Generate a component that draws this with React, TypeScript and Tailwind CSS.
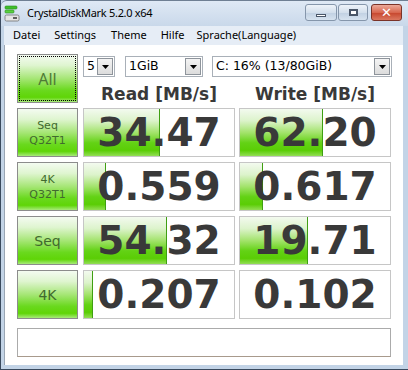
import React from "react";

const rows = [
  { label: ["Seq", "Q32T1"], read: "34.47", rw: 76, write: "62.20", ww: 83 },
  { label: ["4K", "Q32T1"], read: "0.559", rw: 22, write: "0.617", ww: 23 },
  { label: ["Seq"], read: "54.32", rw: 83, write: "19.71", ww: 68 },
  { label: ["4K"], read: "0.207", rw: 9, write: "0.102", ww: 0 },
];

const barBg =
  "bg-[linear-gradient(to_bottom,#f3faef_0%,#dcf3cb_25%,#a3e36c_50%,#63d215_72%,#5acd05_88%,#93de55_100%)]";
const btnBg =
  "bg-[linear-gradient(to_bottom,#f4fbf1_0%,#dff5d0_22%,#a6e676_50%,#6ad91e_75%,#5fd507_90%,#a8ea7a_100%)]";

function Combo({ w, text }: { w: string; text: string }) {
  return (
    <div
      className={`${w} h-[21px] bg-white border border-[#a9b0b8] flex items-center justify-between pl-[3px] pr-[1px]`}
    >
      <span className="text-[12.5px] text-black leading-none" style={{ fontFamily: '"DejaVu Sans", sans-serif' }}>
        {text}
      </span>
      <div className="w-[16px] h-[17px] border border-[#8e949b] bg-[linear-gradient(to_bottom,#f4f4f4,#dcdcdc)] flex items-center justify-center">
        <svg width="7" height="4" viewBox="0 0 7 4">
          <path d="M0 0 H7 L3.5 4 Z" fill="#000" />
        </svg>
      </div>
    </div>
  );
}

function ValueBox({ value, bar }: { value: string; bar: number }) {
  return (
    <div className="relative w-[152px] h-[49px] border border-[#c6c6c6] bg-white flex items-center justify-center overflow-hidden">
      {bar > 0 && (
        <div
          className={`absolute left-0 top-0 bottom-0 ${barBg} border-r border-[#3f9f12]`}
          style={{ width: bar }}
        />
      )}
      <span
        className="relative text-[39px] font-bold leading-none text-[#393939]"
        style={{ fontFamily: '"DejaVu Sans", sans-serif' }}
      >
        {value}
      </span>
    </div>
  );
}

const capBtn =
  "h-[17px] rounded-[3px] border border-[#8596ab] bg-[linear-gradient(to_bottom,#eef3f9,#d3dfec_50%,#c0d0e2_51%,#d6e2ef)] flex items-center justify-center";

export default function App() {
  return (
    <div className="w-[408px] h-[370px] bg-[#c3d4e7] border-l border-b border-[#3a4a5e] flex flex-col overflow-hidden" style={{ fontFamily: '"Noto Sans", sans-serif' }}>
      {/* Title bar */}
      <div className="h-[26px] flex items-center bg-[linear-gradient(to_bottom,#dfe9f5,#c9d8ea)] border-t border-[#6f7f93] rounded-tl-[6px]">
        <svg className="ml-[3px]" width="17" height="17" viewBox="0 0 17 17">
          <rect x="1" y="1" width="12" height="3" rx="1" fill="#3fbf2a" stroke="#2a8a1e" strokeWidth="0.6" />
          <rect x="1" y="5" width="9" height="3" rx="1" fill="#5ad040" stroke="#2a8a1e" strokeWidth="0.6" />
          <rect x="1" y="10" width="14" height="6" rx="1.5" fill="#e4e4e4" stroke="#707070" strokeWidth="0.8" />
          <rect x="9" y="12" width="4" height="2" fill="#606060" />
        </svg>
        <span className="ml-[6px] text-[11px] tracking-[-0.3px] text-black">CrystalDiskMark 5.2.0 x64</span>
        <div className="flex-1" />
        <div className="flex items-start self-start mt-[3px] mr-[6px] gap-[1px]">
          <div className={`w-[32px] ${capBtn}`}>
            <div className="w-[10px] h-[3px] mt-[5px] bg-white border border-[#4a5668]" />
          </div>
          <div className={`w-[30px] ${capBtn}`}>
            <div className="w-[9px] h-[7px] border-2 border-[#4a5668] bg-white" />
          </div>
          <div className="ml-[2px] w-[31px] h-[17px] rounded-[3px] border border-[#7a3328] bg-[linear-gradient(to_bottom,#eba999,#d8674f_50%,#c6452c_51%,#db7860)] flex items-center justify-center">
            <span className="text-white text-[13px] font-bold leading-none" style={{ fontFamily: '"DejaVu Sans", sans-serif' }}>✕</span>
          </div>
        </div>
      </div>
      {/* Menu bar */}
      <div className="h-[19px] flex items-center bg-[#e6edf6] text-[11px] text-black mr-[5px] ml-[3px]">
        <span className="ml-[9px]">Datei</span>
        <span className="ml-[14px]">Settings</span>
        <span className="ml-[15px]">Theme</span>
        <span className="ml-[14px]">Hilfe</span>
        <span className="ml-[12px]">Sprache(Language)</span>
      </div>
      {/* Client */}
      <div className="flex-1 ml-[3px] mr-[5px] mb-[4px] bg-white border-l border-[#9aa6b4] pl-[12px] pt-[9px] flex flex-col gap-[5px]">
        <div className="flex h-[49px]">
          <div className={`w-[61px] h-[49px] ${btnBg} border border-[#8c8c8c] p-[1px]`}>
            <div className="w-full h-full border border-dotted border-black flex items-center justify-center">
              <span className="text-[16px] text-[#4f7b36] leading-none">All</span>
            </div>
          </div>
          <div className="ml-[5px] w-[309px] flex flex-col">
            <div className="mt-[2px] flex">
              <Combo w="w-[32px]" text="5" />
              <div className="ml-[10px]">
                <Combo w="w-[78px]" text="1GiB" />
              </div>
              <div className="ml-[9px]">
                <Combo w="w-[180px]" text="C: 16% (13/80GiB)" />
              </div>
            </div>
            <div className="mt-[9px] flex text-[17px] font-bold leading-none text-[#393939]" style={{ fontFamily: '"DejaVu Sans", sans-serif' }}>
              <div className="w-[152px] text-center">Read [MB/s]</div>
              <div className="ml-[4px] w-[152px] text-center">Write [MB/s]</div>
            </div>
          </div>
        </div>
        {rows.map((r, i) => (
          <div key={i} className="flex h-[49px]">
            <div
              className={`w-[61px] h-[49px] ${btnBg} border border-[#8c8c8c] flex flex-col items-center justify-center text-[#416a2e]`}
              style={{ fontFamily: '"DejaVu Sans", sans-serif' }}
            >
              {r.label.length === 2 ? (
                <>
                  <span className="text-[11px] leading-[15px]">{r.label[0]}</span>
                  <span className="text-[11px] leading-[15px]">{r.label[1]}</span>
                </>
              ) : (
                <span className="text-[14px] leading-none">{r.label[0]}</span>
              )}
            </div>
            <div className="ml-[5px]">
              <ValueBox value={r.read} bar={r.rw} />
            </div>
            <div className="ml-[4px]">
              <ValueBox value={r.write} bar={r.ww} />
            </div>
          </div>
        ))}
        <div className="mt-[4px] w-[374px] h-[29px] border border-[#ababab] border-b-[#a89a8c] bg-white" />
      </div>
    </div>
  );
}
